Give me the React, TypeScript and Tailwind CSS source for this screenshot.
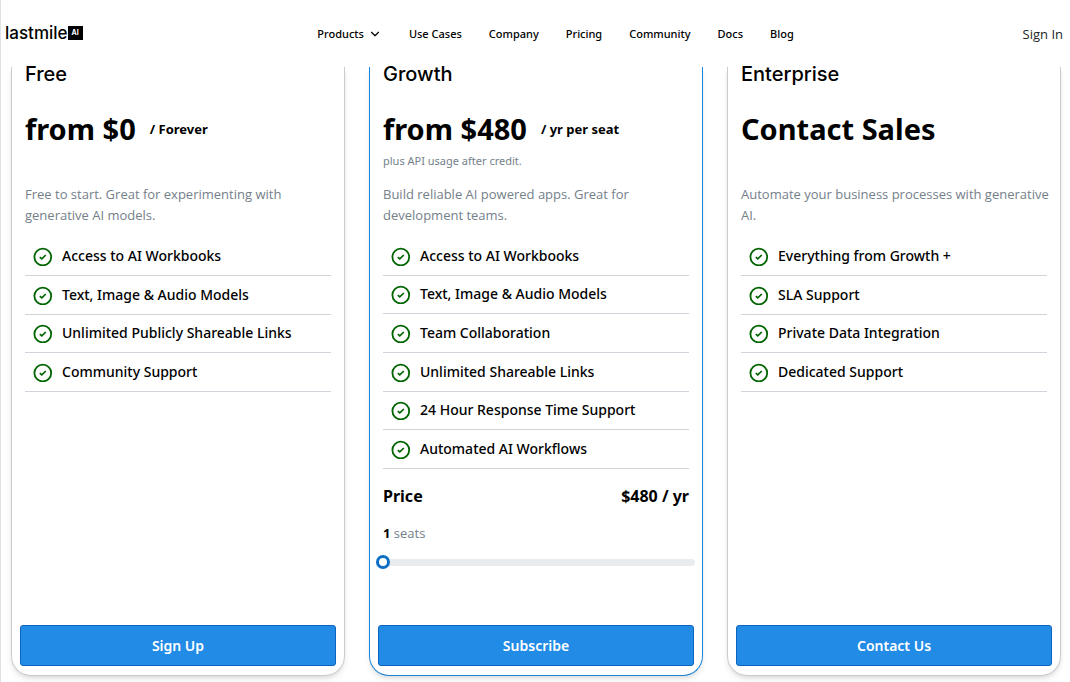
import React, { useState } from 'react';
import { ChevronDown } from 'lucide-react';

interface Plan {
  name: string;
  price: string;
  period?: string;
  note?: string;
  description: string;
  features: string[];
  action: string;
  highlighted?: boolean;
}

const plans: Plan[] = [
  {
    name: 'Free',
    price: 'from $0',
    period: '/ Forever',
    description: 'Free to start. Great for experimenting with generative AI models.',
    features: [
      'Access to AI Workbooks',
      'Text, Image & Audio Models',
      'Unlimited Publicly Shareable Links',
      'Community Support',
    ],
    action: 'Sign Up',
  },
  {
    name: 'Growth',
    price: 'from $480',
    period: '/ yr per seat',
    note: 'plus API usage after credit.',
    description: 'Build reliable AI powered apps. Great for development teams.',
    features: [
      'Access to AI Workbooks',
      'Text, Image & Audio Models',
      'Team Collaboration',
      'Unlimited Shareable Links',
      '24 Hour Response Time Support',
      'Automated AI Workflows',
    ],
    action: 'Subscribe',
    highlighted: true,
  },
  {
    name: 'Enterprise',
    price: 'Contact Sales',
    description: 'Automate your business processes with generative AI.',
    features: [
      'Everything from Growth +',
      'SLA Support',
      'Private Data Integration',
      'Dedicated Support',
    ],
    action: 'Contact Us',
  },
];

const links = ['Use Cases', 'Company', 'Pricing', 'Community', 'Docs', 'Blog'];

const CheckIcon: React.FC = () => (
  <svg viewBox="0 0 20 20" className="w-5 h-5 shrink-0" fill="none" stroke="#006400" strokeWidth="1.8" aria-hidden="true">
    <circle cx="9.8" cy="11" r="8.4" />
    <path d="M6.8 11.1l2 1.8 4-3.9" strokeWidth="1.7" />
  </svg>
);

const Header: React.FC = () => {
  return (
    <header className="h-[67px] pl-1 pr-[7px] flex items-center justify-between bg-white">
      <a href="#" className="flex items-center pb-0.5 font-['Inter',sans-serif] text-[17px] leading-5 font-medium text-black">
        lastmile
        <span className="w-[15px] h-3.5 bg-black text-white text-[7px] leading-3.5 font-bold text-center">AI</span>
      </a>

      <nav className="flex items-center gap-[27px] pl-1.5 pt-px text-[11px] leading-5 font-medium text-black">
        <button type="button" className="flex items-center gap-1">
          Products
          <ChevronDown className="w-3.5 h-3.5" />
        </button>
        {links.map((link) => (
          <a key={link} href="#">{link}</a>
        ))}
      </nav>

      <a href="#" className="pt-px font-['Open_Sans',sans-serif] text-[13px] leading-5 text-[#212529]">Sign In</a>
    </header>
  );
};

const SeatPicker: React.FC = () => {
  const [seats, setSeats] = useState(1);

  return (
    <div>
      <div className="mt-4 flex justify-between text-[16px] leading-[22px] font-bold text-black">
        <span>Price</span>
        <span>${seats * 480} / yr</span>
      </div>
      <label htmlFor="seats" className="block mt-4 font-['Open_Sans',sans-serif] text-[13px] leading-5 text-[#74808a]">
        <b className="text-black">{seats}</b> seats
      </label>
      <input
        id="seats"
        type="range"
        min={1}
        max={50}
        value={seats}
        onChange={(e) => setSeats(Number(e.target.value))}
        className="block w-[calc(100%+13px)] -ml-[7px] mt-3 h-3.5 appearance-none bg-transparent [&::-webkit-slider-runnable-track]:h-[7px] [&::-webkit-slider-runnable-track]:rounded-full [&::-webkit-slider-runnable-track]:bg-[#e9ecef] [&::-webkit-slider-thumb]:appearance-none [&::-webkit-slider-thumb]:w-3.5 [&::-webkit-slider-thumb]:h-3.5 [&::-webkit-slider-thumb]:-mt-1 [&::-webkit-slider-thumb]:rounded-full [&::-webkit-slider-thumb]:border-[3px] [&::-webkit-slider-thumb]:border-[#0b6fc6] [&::-webkit-slider-thumb]:bg-white"
      />
    </div>
  );
};

const PlanCard: React.FC<{ plan: Plan }> = ({ plan }) => {
  return (
    <section
      className={`flex flex-col min-h-[609px] border border-t-0 rounded-b-[20px] px-2 pb-[9px] shadow-md ${
        plan.highlighted ? 'border-[#1c84d6]' : 'border-[#c8cbd0]'
      }`}
    >
      <div className="grow px-[5px]">
        <h2 className="font-['Inter',sans-serif] text-[20px] leading-3.5 font-medium text-black">{plan.name}</h2>
        <div className="mt-7 flex items-center gap-3.5 font-bold text-black">
          <span className="text-[29px] leading-10">{plan.price}</span>
          {plan.period && <span className="text-[13px] leading-5">{plan.period}</span>}
        </div>
        <p className="h-5 mt-0.5 text-[11px] leading-5 text-[#74808a]">{plan.note}</p>
        <p className="mt-[13px] -mr-2 font-['Open_Sans',sans-serif] text-[13px] leading-[21px] text-[#74808a]">{plan.description}</p>

        <ul className={`mt-[11px] grid auto-rows-fr ${plan.features.length > 4 ? 'min-h-[232px]' : 'min-h-[155px]'}`}>
          {plan.features.map((feature) => (
            <li key={feature} className="flex items-center gap-[9px] pl-2 border-b border-[#ced4da] text-[14px] leading-6 font-medium text-black">
              <CheckIcon />
              {feature}
            </li>
          ))}
        </ul>

        {plan.highlighted && <SeatPicker />}
      </div>

      <button
        type="button"
        className="h-[41px] rounded-[3px] border border-[#0b64bd] bg-[#228be6] text-[14px] leading-6 font-semibold text-white"
      >
        {plan.action}
      </button>
    </section>
  );
};

const App: React.FC = () => {
  return (
    <div className="min-h-screen bg-white border-l border-[#dee2e6] font-['Noto_Sans',sans-serif]">
      <Header />
      <main className="grid grid-cols-3 gap-6 pl-2.5 pr-[9px]">
        {plans.map((plan) => (
          <PlanCard key={plan.name} plan={plan} />
        ))}
      </main>
    </div>
  );
};

export default App;
